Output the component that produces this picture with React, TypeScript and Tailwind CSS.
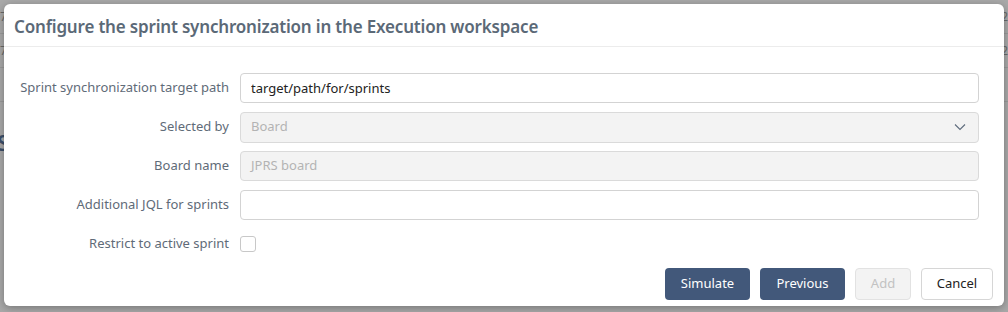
const rows = [0, 1, 2];

function Field({ label, children }: { label: string; children: React.ReactNode }) {
  return (
    <>
      <div className="flex items-center justify-end h-[30px] text-[13px] text-[#5f6b78]">{label}</div>
      <div className="flex items-center h-[30px]">{children}</div>
    </>
  );
}

export default function App() {
  return (
    <div
      className="relative w-[1008px] h-[312px] overflow-hidden bg-[#a9a9a9]"
      style={{ fontFamily: '"Noto Sans", "Open Sans", sans-serif' }}
    >
      {/* page behind the overlay */}
      <div className="flex flex-col">
        {rows.map((r) => (
          <div key={r} className="flex justify-between h-[34px] border-b border-[#9a9a9a] text-[12px] text-[#6a6a6a] pt-[8px]">
            <span>{r < 2 ? "7" : ""}</span>
            <span>{r < 2 ? "2" : ""}</span>
          </div>
        ))}
      </div>
      <div className="absolute left-[-3px] top-[126px] text-[22px] font-semibold text-[#3d4f6a]">S</div>

      {/* dialog */}
      <div className="absolute left-[4px] top-[4px] w-[1000px] h-[302px] bg-white rounded-[6px] shadow-[0_2px_8px_rgba(0,0,0,0.3)] flex flex-col">
        <div className="h-[43px] flex items-center pl-[10px] pt-[3px] border-b border-[#ececec]">
          <h1 className="text-[17px] font-semibold text-[#5b6977] tracking-[-0.18px]">
            Configure the sprint synchronization in the Execution workspace
          </h1>
        </div>

        <div className="grid grid-cols-[225px_1fr] gap-x-[11px] gap-y-[9px] pt-[26px] pr-[25px]">
          <Field label="Sprint synchronization target path">
            <input
              className="w-full h-[30px] border border-[#d3d3d3] rounded-[4px] px-[10px] text-[13px] text-[#222] outline-none"
              defaultValue="target/path/for/sprints"
            />
          </Field>
          <Field label="Selected by">
            <div className="w-full h-[31px] border border-[#dadada] bg-[#f3f3f3] rounded-[4px] pl-[10px] pr-[12px] flex items-center justify-between text-[13px] text-[#b3b3b3]">
              <span>Board</span>
              <svg width="12" height="8" viewBox="0 0 12 8" fill="none" stroke="#5d6b7c" strokeWidth="1.1">
                <path d="M1 1.5l5 5 5-5" />
              </svg>
            </div>
          </Field>
          <Field label="Board name">
            <div className="w-full h-[30px] border border-[#dadada] bg-[#f3f3f3] rounded-[4px] px-[10px] flex items-center text-[13px] text-[#b3b3b3]">
              JPRS board
            </div>
          </Field>
          <Field label="Additional JQL for sprints">
            <input className="w-full h-[30px] border border-[#d3d3d3] rounded-[4px] px-[10px] text-[13px] outline-none" />
          </Field>
          <Field label="Restrict to active sprint">
            <span className="w-[16px] h-[16px] border border-[#c8c8c8] rounded-[3px] bg-white" />
          </Field>
        </div>

        <div className="flex justify-end gap-[10px] mt-[9px] pr-[11px] text-[13px]">
          <button className="h-[32px] w-[85px] rounded-[4px] bg-[#42587a] text-white">Simulate</button>
          <button className="h-[32px] w-[85px] rounded-[4px] bg-[#42587a] text-white">Previous</button>
          <button className="h-[32px] w-[56px] rounded-[4px] bg-[#f3f3f3] border border-[#e2e2e2] text-[#c2c2c2]">Add</button>
          <button className="h-[32px] w-[72px] rounded-[4px] bg-white border border-[#d6d6d6] text-[#222]">Cancel</button>
        </div>
      </div>
    </div>
  );
}
